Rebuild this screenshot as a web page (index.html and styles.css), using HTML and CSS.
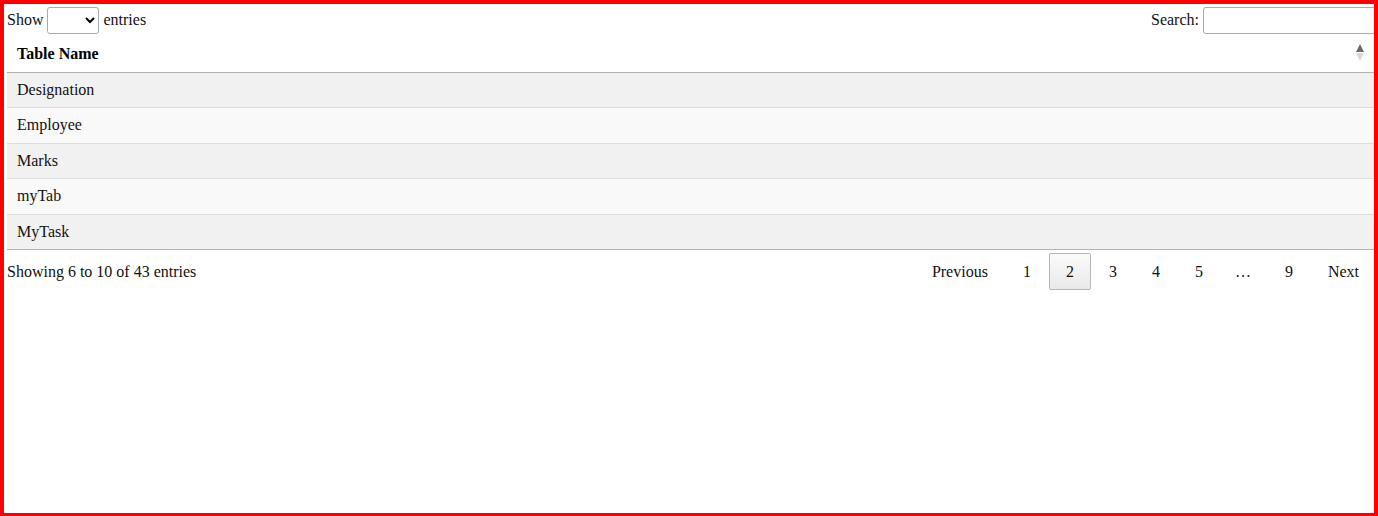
FILE: index.html
```html
<!DOCTYPE html>
<html>
<head>
<meta charset="utf-8">
<link rel="stylesheet" href="styles.css">
</head>
<body>
<div class="frame">
  <div class="wrapper">
    <div class="controls">
      <label class="length">Show <select class="length-select"><option value=""></option></select> entries</label>
      <label class="filter">Search:<input class="filter-input" type="search"></label>
    </div>
    <table class="data">
      <thead>
        <tr><th class="sorted">Table Name</th></tr>
      </thead>
      <tbody>
        <tr class="odd"><td>Designation</td></tr>
        <tr class="even"><td>Employee</td></tr>
        <tr class="odd"><td>Marks</td></tr>
        <tr class="even"><td>myTab</td></tr>
        <tr class="odd"><td>MyTask</td></tr>
      </tbody>
    </table>
    <div class="footer">
      <div class="info">Showing 6 to 10 of 43 entries</div>
      <div class="paginate">
        <a class="btn">Previous</a>
        <a class="btn">1</a>
        <a class="btn current">2</a>
        <a class="btn">3</a>
        <a class="btn">4</a>
        <a class="btn">5</a>
        <span class="ellipsis">…</span>
        <a class="btn">9</a>
        <a class="btn">Next</a>
      </div>
    </div>
  </div>
</div>
</body>
</html>
```
FILE: styles.css
```css
html, body {
  margin: 0;
  padding: 0;
  background: #fff;
}
body {
  font-family: "Liberation Serif", "Times New Roman", serif;
  font-size: 16px;
  color: #111;
}
.frame {
  box-sizing: border-box;
  width: 1378px;
  height: 516px;
  border: 4px solid #ff0000;
  border-bottom-width: 3px;
  overflow: hidden;
}
.wrapper {
  margin-left: 3px;
  margin-right: -2px;
}
.controls {
  display: flex;
  justify-content: space-between;
  align-items: center;
  height: 32px;
  color: #111;
}
.length, .filter {
  display: flex;
  align-items: center;
  line-height: 18px;
}
.length-select {
  box-sizing: border-box;
  width: 52px;
  height: 27px;
  margin: 0 4px;
  border: 1px solid #aaa;
  border-radius: 3px;
  background-color: #fff;
  padding: 4px;
  font-size: 13px;
}
.filter-input {
  box-sizing: border-box;
  width: 173px;
  height: 27px;
  margin-left: 4px;
  border: 1px solid #aaa;
  border-radius: 3px;
  padding: 5px;
  background: transparent;
}
.data {
  width: 100%;
  border-collapse: separate;
  border-spacing: 0;
  border-bottom: 1px solid #b3b3b3;
}
.data th {
  position: relative;
  text-align: left;
  font-weight: bold;
  line-height: 18px;
  padding: 9px 26px 9px 10px;
  border-bottom: 1px solid #b0b0b0;
  color: #000;
}
.data th.sorted::before,
.data th.sorted::after {
  content: "";
  position: absolute;
  right: 12px;
  width: 0;
  height: 0;
  border-left: 4px solid transparent;
  border-right: 4px solid transparent;
}
.data th.sorted::before {
  top: 8px;
  border-bottom: 8px solid #6a6a6a;
}
.data th.sorted::after {
  top: 17px;
  border-top: 8px solid #d8d8d8;
}
.data td {
  line-height: 18.4px;
  padding: 8px 10px;
  border-top: 1px solid #dedede;
  color: #111;
}
.data tbody tr:first-child td {
  border-top: none;
}
.data tr.odd td {
  background: #f1f1f1;
}
.data tr.even td {
  background: #f9f9f9;
}
.footer {
  display: flex;
  justify-content: space-between;
  align-items: flex-start;
  color: #111;
}
.info {
  padding-top: 13px;
  line-height: 18px;
}
.paginate {
  display: flex;
  align-items: center;
  padding-top: 3px;
}
.btn {
  display: block;
  box-sizing: border-box;
  padding: 8px 16px;
  line-height: 19px;
  margin-left: 1px;
  border: 1px solid transparent;
  border-radius: 2px;
  color: #111;
  cursor: pointer;
}
.btn.current {
  border: 1px solid #b5b5b5;
  background: linear-gradient(to bottom, #fbfbfb 0%, #e9e9e9 100%);
}
.ellipsis {
  display: block;
  padding: 0 16px 0 15px;
  line-height: 19px;
  color: #111;
}
```
